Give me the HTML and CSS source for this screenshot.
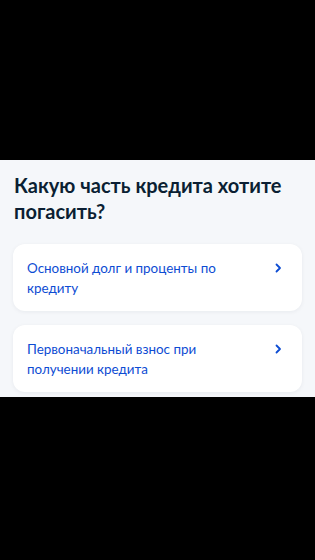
FILE: index.html
```html
<!DOCTYPE html>
<html lang="ru">
<head>
<meta charset="utf-8">
<link rel="stylesheet" href="styles.css">
</head>
<body>
<div class="top"></div>
<section class="panel">
  <h1 class="title">Какую часть кредита хотите погасить?</h1>
  <div class="list">
    <a class="card">
      <span class="card-text">Основной долг и проценты по кредиту</span>
      <svg class="chev" width="8" height="12" viewBox="0 0 8 12"><path d="M2.5 2.5l3.5 3.5-3.5 3.5" fill="none" stroke="#0d4cd3" stroke-width="1.8" stroke-linecap="round" stroke-linejoin="round"/></svg>
    </a>
    <a class="card">
      <span class="card-text">Первоначальный взнос при получении кредита</span>
      <svg class="chev" width="8" height="12" viewBox="0 0 8 12"><path d="M2.5 2.5l3.5 3.5-3.5 3.5" fill="none" stroke="#0d4cd3" stroke-width="1.8" stroke-linecap="round" stroke-linejoin="round"/></svg>
    </a>
  </div>
</section>
</body>
</html>
```
FILE: styles.css
```css
html, body {
  margin: 0;
  padding: 0;
  background: #000;
  font-family: Lato, "Noto Sans", sans-serif;
}
.top {
  height: 160px;
}
.panel {
  background: #f5f7fa;
  height: 237px;
  box-sizing: border-box;
  padding: 12px 13px 0 13px;
}
.title {
  margin: 0 0 20px 1px;
  font-size: 20px;
  line-height: 26px;
  font-weight: 700;
  color: #0b1f33;
}
.list {
  display: flex;
  flex-direction: column;
  gap: 14px;
}
.card {
  display: flex;
  align-items: flex-start;
  justify-content: space-between;
  background: #fff;
  border-radius: 12px;
  box-shadow: 0 1px 4px rgba(11, 31, 51, 0.06);
  padding: 14px 20px 13px 14px;
  color: #0d4cd3;
  font-size: 13.4px;
  line-height: 20px;
}
.card-text {
  max-width: 200px;
}
.chev {
  margin-top: 4px;
  flex: none;
}
```
